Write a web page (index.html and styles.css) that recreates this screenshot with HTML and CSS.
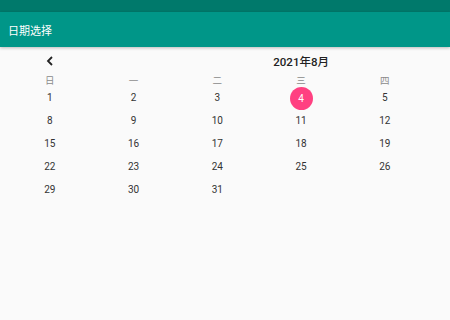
FILE: index.html
```html
<!DOCTYPE html>
<html lang="zh">
<head>
<meta charset="utf-8">
<link rel="stylesheet" href="styles.css">
</head>
<body>
<div class="status-bar"></div>
<header class="app-bar"><span class="app-title">日期选择</span></header>
<main class="calendar">
  <div class="cal-header">
    <span class="nav prev"><svg width="8" height="10" viewBox="0 0 8 10"><path d="M6 1 L2 5 L6 9" fill="none" stroke="#222" stroke-width="1.8"/></svg></span>
    <span class="month-title">2021年8月</span>
  </div>
  <div class="week-row">
    <span>日</span><span>一</span><span>二</span><span>三</span><span>四</span>
  </div>
  <div class="days">
    <span>1</span><span>2</span><span>3</span><span class="selected"><b>4</b></span><span>5</span>
    <span>8</span><span>9</span><span>10</span><span>11</span><span>12</span>
    <span>15</span><span>16</span><span>17</span><span>18</span><span>19</span>
    <span>22</span><span>23</span><span>24</span><span>25</span><span>26</span>
    <span>29</span><span>30</span><span>31</span>
  </div>
</main>
</body>
</html>
```
FILE: styles.css
```css
html, body {
  margin: 0;
  padding: 0;
  width: 450px;
  height: 320px;
  overflow: hidden;
  background: #fafafa;
  font-family: Roboto, "Noto Sans CJK SC", sans-serif;
}
.status-bar {
  height: 12px;
  background: #00796b;
}
.app-bar {
  height: 35px;
  background: #009688;
  display: flex;
  align-items: center;
  padding-left: 8px;
  box-shadow: 0 1px 3px rgba(0,0,0,0.25);
  position: relative;
}
.app-title {
  color: #fff;
  font-size: 11px;
  font-family: "Noto Sans CJK SC", sans-serif;
  margin-top: 1px;
}
.calendar {
  margin-left: 8px;
}
.cal-header,
.week-row,
.days {
  display: grid;
  grid-template-columns: repeat(5, 83.75px);
}
.cal-header {
  height: 28px;
  align-items: center;
}
.nav {
  display: flex;
  justify-content: center;
  align-items: center;
}
.prev { grid-column: 1; }
.month-title {
  grid-column: 4;
  justify-self: center;
  white-space: nowrap;
  font-size: 11.5px;
  font-weight: 500;
  color: #222;
}
.week-row {
  height: 11px;
  line-height: 11px;
  font-size: 9.5px;
  color: #8a8a8a;
  text-align: center;
  font-family: "Noto Sans CJK SC", sans-serif;
}
.days {
  grid-auto-rows: 23px;
  font-size: 10px;
  color: #333;
}
.days span {
  display: flex;
  align-items: center;
  justify-content: center;
}
.selected b {
  font-weight: 400;
  width: 23px;
  height: 23px;
  border-radius: 50%;
  background: #ff4081;
  color: #fff;
  display: flex;
  align-items: center;
  justify-content: center;
  margin-top: 1px;
}
```
